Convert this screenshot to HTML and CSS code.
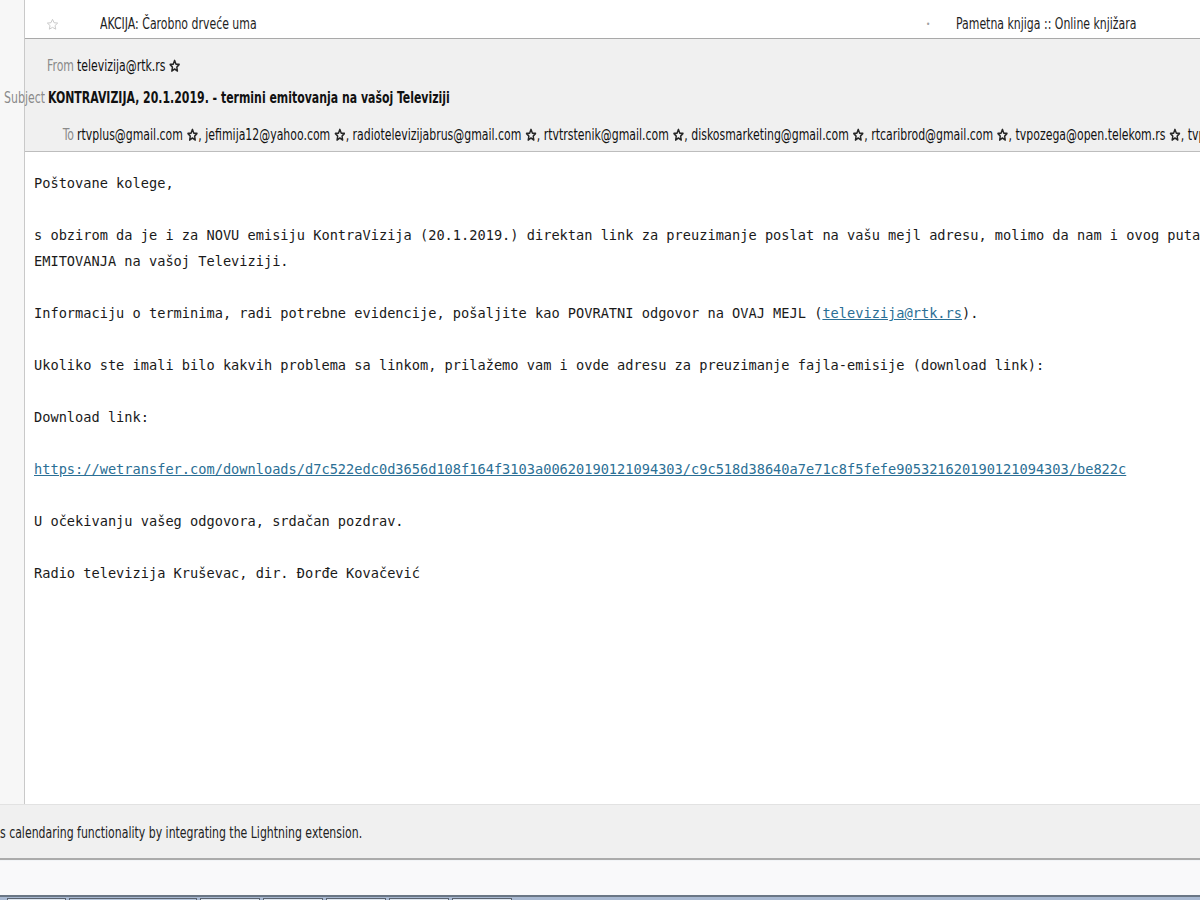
FILE: index.html
```html
<!DOCTYPE html>
<html lang="sr">
<head>
    <meta charset="UTF-8">
    <title>KONTRAVIZIJA, 20.1.2019. - termini emitovanja na vašoj Televiziji</title>
    <link rel="stylesheet" href="styles.css">
</head>
<body>
    <div class="window">
        <div class="side"></div>
        <div class="main">
            <!-- lista poruka -->
            <div class="msg-row">
                <span class="row-star">
                    <svg width="13" height="13" viewBox="0 0 24 24"><path d="M12 2.5l2.9 6.2 6.7.7-5 4.6 1.4 6.6L12 17.3l-5.9 3.3 1.4-6.6-5-4.6 6.7-.7z" fill="none" stroke="#c8c8c8" stroke-width="1.8" stroke-linejoin="round"/></svg>
                </span>
                <span class="row-subject"><span class="sq">AKCIJA: Čarobno drveće uma</span></span>
                <span class="row-dot">•</span>
                <span class="row-from"><span class="sq">Pametna knjiga :: Online knjižara</span></span>
            </div>

            <!-- zaglavlje poruke -->
            <div class="msg-header">
                <div class="hdr-row">
                    <span class="hdr-label">From</span>
                    <span class="hdr-value">televizija@rtk.rs<svg class="star" viewBox="0 0 24 24"><path d="M12 2.5l2.9 6.2 6.7.7-5 4.6 1.4 6.6L12 17.3l-5.9 3.3 1.4-6.6-5-4.6 6.7-.7z"/></svg></span>
                </div>
                <div class="hdr-row subject">
                    <span class="hdr-label">Subject</span>
                    <span class="hdr-value bold">KONTRAVIZIJA, 20.1.2019. - termini emitovanja na vašoj Televiziji</span>
                </div>
                <div class="hdr-row to">
                    <span class="hdr-label">To</span>
                    <span class="hdr-value">rtvplus@gmail.com<svg class="star" viewBox="0 0 24 24"><path d="M12 2.5l2.9 6.2 6.7.7-5 4.6 1.4 6.6L12 17.3l-5.9 3.3 1.4-6.6-5-4.6 6.7-.7z"/></svg>, jefimija12@yahoo.com<svg class="star" viewBox="0 0 24 24"><path d="M12 2.5l2.9 6.2 6.7.7-5 4.6 1.4 6.6L12 17.3l-5.9 3.3 1.4-6.6-5-4.6 6.7-.7z"/></svg>, radiotelevizijabrus@gmail.com<svg class="star" viewBox="0 0 24 24"><path d="M12 2.5l2.9 6.2 6.7.7-5 4.6 1.4 6.6L12 17.3l-5.9 3.3 1.4-6.6-5-4.6 6.7-.7z"/></svg>, rtvtrstenik@gmail.com<svg class="star" viewBox="0 0 24 24"><path d="M12 2.5l2.9 6.2 6.7.7-5 4.6 1.4 6.6L12 17.3l-5.9 3.3 1.4-6.6-5-4.6 6.7-.7z"/></svg>, diskosmarketing@gmail.com<svg class="star" viewBox="0 0 24 24"><path d="M12 2.5l2.9 6.2 6.7.7-5 4.6 1.4 6.6L12 17.3l-5.9 3.3 1.4-6.6-5-4.6 6.7-.7z"/></svg>, rtcaribrod@gmail.com<svg class="star" viewBox="0 0 24 24"><path d="M12 2.5l2.9 6.2 6.7.7-5 4.6 1.4 6.6L12 17.3l-5.9 3.3 1.4-6.6-5-4.6 6.7-.7z"/></svg>, tvpozega@open.telekom.rs<svg class="star" viewBox="0 0 24 24"><path d="M12 2.5l2.9 6.2 6.7.7-5 4.6 1.4 6.6L12 17.3l-5.9 3.3 1.4-6.6-5-4.6 6.7-.7z"/></svg>, tvpo</span>
                </div>
            </div>

            <!-- tekst poruke -->
            <div class="msg-body">
                <p>Poštovane kolege,</p>
                <p>s obzirom da je i za NOVU emisiju KontraVizija (20.1.2019.) direktan link za preuzimanje poslat na vašu mejl adresu, molimo da nam i ovog puta<br>EMITOVANJA na vašoj Televiziji.</p>
                <p>Informaciju o terminima, radi potrebne evidencije, pošaljite kao POVRATNI odgovor na OVAJ MEJL (<a href="#">televizija@rtk.rs</a>).</p>
                <p>Ukoliko ste imali bilo kakvih problema sa linkom, prilažemo vam i ovde adresu za preuzimanje fajla-emisije (download link):</p>
                <p>Download link:</p>
                <p><a href="#">https://wetransfer.com/downloads/d7c522edc0d3656d108f164f3103a00620190121094303/c9c518d38640a7e71c8f5fefe905321620190121094303/be822c</a></p>
                <p>U očekivanju vašeg odgovora, srdačan pozdrav.</p>
                <p>Radio televizija Kruševac, dir. Đorđe Kovačević</p>
            </div>
        </div>
    </div>

    <div class="notify"><span class="sq">s calendaring functionality by integrating the Lightning extension.</span></div>
    <div class="statusbar"></div>

    <div class="taskbar">
        <div class="task w1"></div>
        <div class="task w2"><span class="task-red"></span></div>
        <div class="task w3"></div>
        <div class="task w3"></div>
        <div class="task w3"></div>
        <div class="task w3"></div>
        <div class="task w3"></div>
    </div>
</body>
</html>
```

FILE: styles.css
```css
/* Opšti stilovi */
body {
    margin: 0;
    width: 1200px;
    height: 900px;
    overflow: hidden;
    background: #fafafa;
    font-family: "DejaVu Sans Condensed", "DejaVu Sans", sans-serif;
    font-stretch: condensed;
    font-size: 15px;
    color: #1e1e1e;
}

/* uski font (Segoe UI na snimku deluje sabijeno) */
.sq {
    display: inline-block;
    white-space: nowrap;
    transform: scaleX(0.81);
    transform-origin: 0 50%;
}

.window {
    display: flex;
    height: 804px;
}

/* Levi panel (folderi) */
.side {
    width: 24px;
    flex-shrink: 0;
    background: #f7f7f7;
    border-right: 1px solid #c9c9c9;
}

.main {
    flex: 1;
    display: flex;
    flex-direction: column;
    min-width: 0;
    background: #fff;
}

/* Red u listi poruka */
.msg-row {
    height: 39px;
    display: flex;
    align-items: center;
    padding-top: 10px;
    box-sizing: border-box;
    background: #fff;
    border-bottom: 1px solid #a9a9a9;
    color: #1e1e1e;
}

.row-star {
    width: 13px;
    margin-left: 21px;
    display: flex;
}

.row-subject {
    margin-left: 41px;
    width: 826px;
}

.row-dot {
    color: #a0a0a0;
    font-size: 8px;
    width: 30px;
}

/* Zaglavlje poruke */
.msg-header {
    background: #f0f0f0;
    padding-top: 11px;
    border-bottom: 1px solid #bdbdbd;
}

.hdr-row {
    display: flex;
    height: 32px;
    line-height: 32px;
    white-space: nowrap;
}

.hdr-label {
    width: 49px;
    flex-shrink: 0;
    margin-right: 3px;
    display: flex;
    justify-content: flex-end;
    color: #8a8a8a;
    transform: scaleX(0.81);
    transform-origin: 100% 50%;
}

.hdr-value {
    flex-shrink: 0;
    color: #111;
    transform: scaleX(0.81);
    transform-origin: 0 50%;
}

.hdr-row.subject {
    margin-left: -22px;
}

.hdr-row.subject .hdr-label {
    width: 42px;
    margin-right: 3px;
}

.hdr-row.to {
    margin-top: 5px;
}

.bold {
    font-weight: bold;
}

.star {
    width: 15px;
    height: 14px;
    margin-left: 4px;
    vertical-align: -2px;
    fill: none;
    stroke: #262626;
    stroke-width: 3;
    stroke-linejoin: round;
}

/* Tekst poruke */
.msg-body {
    flex: 1;
    padding: 18px 0 0 9px;
    font-family: "DejaVu Sans Mono", "Liberation Mono", monospace;
    font-stretch: normal;
    font-size: 13.65px;
    line-height: 26px;
    color: #1a1a1a;
    white-space: nowrap;
    overflow: hidden;
}

.msg-body p {
    margin: 0 0 26px;
}

.msg-body a {
    color: #2b6f95;
    text-decoration: underline;
}

/* Obaveštenje na dnu */
.notify {
    height: 53px;
    line-height: 56px;
    background: #f0f0f0;
    border-top: 1px solid #e2e2e2;
    border-bottom: 2px solid #ababab;
    color: #222;
    white-space: nowrap;
}

.statusbar {
    height: 34px;
    background: #f9f9fa;
    border-top: 1px solid #f2f4f6;
}

/* Windows taskbar */
.taskbar {
    height: 7px;
    background: #a9b9d1;
    border-top: 2px solid #6a7684;
    display: flex;
    gap: 3px;
    padding-left: 7px;
}

.task {
    height: 8px;
    margin-top: 1px;
    background: #dde5ef;
    border: 1px solid #5b6470;
    border-bottom: none;
    box-sizing: border-box;
    position: relative;
}

.task.w1 { width: 59px; }
.task.w2 { width: 128px; background: #b7c6dc; }
.task.w3 { width: 60px; }

.task-red {
    position: absolute;
    left: 80px;
    top: 1px;
    width: 33px;
    height: 6px;
    background: #e88a94;
}
```
